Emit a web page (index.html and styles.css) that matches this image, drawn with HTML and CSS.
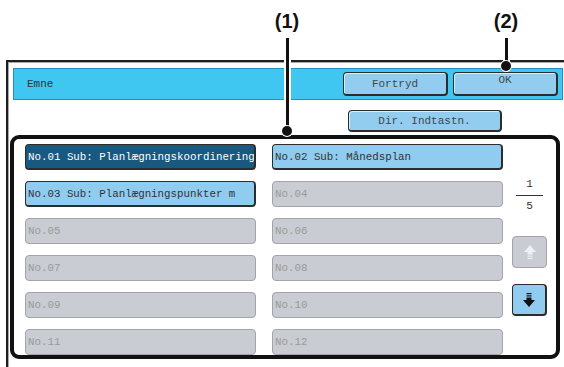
FILE: index.html
```html
<!DOCTYPE html>
<html lang="en">
<head>
    <meta charset="UTF-8">
    <title>Emne</title>
    <link rel="stylesheet" href="styles.css">
</head>
<body>

    <div class="stage">
        <div class="window">
            <div class="header">
                <span class="title">Emne</span>
                <div class="header-buttons">
                    <button class="btn">Fortryd</button>
                    <button class="btn ok">OK</button>
                </div>
            </div>

            <div class="toolbar">
                <button class="btn dir">Dir. Indtastn.</button>
            </div>

            <div class="list-box">
                <div class="list">
                    <div class="item selected">No.01 Sub: Planlægningskoordinering</div>
                    <div class="item active">No.02 Sub: Månedsplan</div>
                    <div class="item active">No.03 Sub: Planlægningspunkter m</div>
                    <div class="item">No.04</div>
                    <div class="item">No.05</div>
                    <div class="item">No.06</div>
                    <div class="item">No.07</div>
                    <div class="item">No.08</div>
                    <div class="item">No.09</div>
                    <div class="item">No.10</div>
                    <div class="item">No.11</div>
                    <div class="item">No.12</div>
                </div>

                <div class="pager">
                    <div class="page-count">
                        <span>1</span>
                        <span class="page-line"></span>
                        <span>5</span>
                    </div>
                    <button class="scroll-btn disabled">
                        <svg width="14" height="16" viewBox="0 0 14 16">
                            <polygon points="7,1 13,8 1,8" fill="#eef0f2"/>
                            <rect x="4.5" y="8" width="5" height="2.5" fill="#eef0f2"/>
                            <rect x="4.5" y="11.5" width="5" height="1.2" fill="#eef0f2"/>
                            <rect x="4.5" y="13.8" width="5" height="1.2" fill="#eef0f2"/>
                        </svg>
                    </button>
                    <button class="scroll-btn">
                        <svg width="14" height="16" viewBox="0 0 14 16">
                            <rect x="4.5" y="1" width="5" height="1.2" fill="#111"/>
                            <rect x="4.5" y="3.3" width="5" height="1.2" fill="#111"/>
                            <rect x="4.5" y="5.5" width="5" height="2.5" fill="#111"/>
                            <polygon points="1,8 13,8 7,15" fill="#111"/>
                        </svg>
                    </button>
                </div>
            </div>
        </div>

        <!-- callouts -->
        <div class="callout callout-1">
            <span class="callout-label">(1)</span>
            <span class="callout-line"></span>
            <span class="callout-dot"></span>
        </div>
        <div class="callout callout-2">
            <span class="callout-label">(2)</span>
            <span class="callout-line"></span>
            <span class="callout-dot"></span>
        </div>
    </div>

</body>
</html>
```

FILE: styles.css
```css
body {
    margin: 0;
    background-color: #ffffff;
    font-family: 'Liberation Mono', 'DejaVu Sans Mono', monospace;
    overflow: hidden;
}
.stage {
    position: relative;
    width: 564px;
    height: 367px;
    overflow: hidden;
}
.window {
    margin: 60px 0 0 6px;
    width: 560px;
    height: 300px;
    border: 2px solid #1e1e1e;
    border-right: none;
    box-shadow: inset 1px 1px 0 #a9a9a9;
    padding: 6px 0 0 5px;
    box-sizing: content-box;
}
.header {
    display: flex;
    justify-content: space-between;
    align-items: center;
    height: 30px;
    width: 531px;
    background-color: #3fc6f1;
    border: 1px solid #2a8cc0;
    padding: 0 4px 0 13px;
    box-sizing: content-box;
}
.title {
    font-size: 11px;
    color: #333;
}
.header-buttons {
    display: flex;
    gap: 5px;
}
.btn {
    font-family: 'Liberation Mono', monospace;
    font-size: 11px;
    color: #444;
    background-color: #92cdef;
    border: 1px solid #2c2c2c;
    border-right-width: 2px;
    border-bottom-width: 2px;
    border-radius: 4px;
    width: 105px;
    height: 24px;
    padding: 0;
    box-shadow: inset 1px 1px 0 #d7eefb;
}
.btn.ok {
    padding-bottom: 8px;
}
.toolbar {
    display: flex;
    padding: 10px 0 0 335px;
}
.btn.dir {
    width: 154px;
    height: 22px;
}
.list-box {
    display: flex;
    margin: 3px 0 0 -3px;
    width: 542px;
    height: 216px;
    border: 4px solid #111;
    border-radius: 9px;
    overflow: hidden;
}
.list {
    display: grid;
    grid-template-columns: 231px 231px;
    grid-auto-rows: 26px;
    column-gap: 16px;
    row-gap: 11px;
    padding: 5px 0 0 11px;
}
.item {
    display: flex;
    align-items: center;
    padding-left: 2px;
    font-size: 10.8px;
    color: #9a9a9a;
    background-color: #c9ccd2;
    border: 1px solid #a2a4a8;
    border-radius: 4px;
    white-space: nowrap;
    overflow: hidden;
}
.item.active {
    color: #333;
    background-color: #90ccef;
    border: 1px solid #2c2c2c;
    border-right-width: 2px;
    border-bottom-width: 2px;
}
.item.selected {
    color: #ffffff;
    background-color: #19587f;
    border: 1px solid #2c2c2c;
    border-right-width: 2px;
    border-bottom-width: 2px;
}
.pager {
    display: flex;
    flex-direction: column;
    align-items: center;
    width: 53px;
    padding-top: 38px;
}
.page-count {
    display: flex;
    flex-direction: column;
    align-items: center;
    font-size: 11px;
    color: #333;
    line-height: 14px;
}
.page-line {
    width: 27px;
    height: 1px;
    background-color: #333;
    margin: 4px 0 3px;
}
.scroll-btn {
    display: flex;
    align-items: center;
    justify-content: center;
    width: 35px;
    height: 32px;
    margin-top: 23px;
    padding: 0;
    background-color: #90ccef;
    border: 1px solid #2c2c2c;
    border-right-width: 2px;
    border-bottom-width: 2px;
    border-radius: 4px;
}
.scroll-btn.disabled {
    background-color: #c9ccd2;
    border: 1px solid #a2a4a8;
}
.scroll-btn + .scroll-btn {
    margin-top: 16px;
}
.callout {
    position: absolute;
    top: 9px;
    display: flex;
    flex-direction: column;
    align-items: center;
    width: 40px;
}
.callout-1 {
    left: 267px;
}
.callout-2 {
    left: 486px;
}
.callout-label {
    font-family: 'Liberation Sans', Arial, sans-serif;
    font-weight: bold;
    font-size: 20px;
    line-height: 24px;
    color: #111;
}
.callout-line {
    width: 3px;
    background-color: #111;
    box-shadow: 0 0 0 2px #ffffff;
    margin-top: 5px;
}
.callout-1 .callout-line {
    height: 93px;
}
.callout-2 .callout-line {
    height: 28px;
}
.callout-dot {
    width: 10px;
    height: 10px;
    margin-top: -5px;
    border-radius: 50%;
    background-color: #111;
    box-shadow: 0 0 0 1px #ffffff;
}
```
